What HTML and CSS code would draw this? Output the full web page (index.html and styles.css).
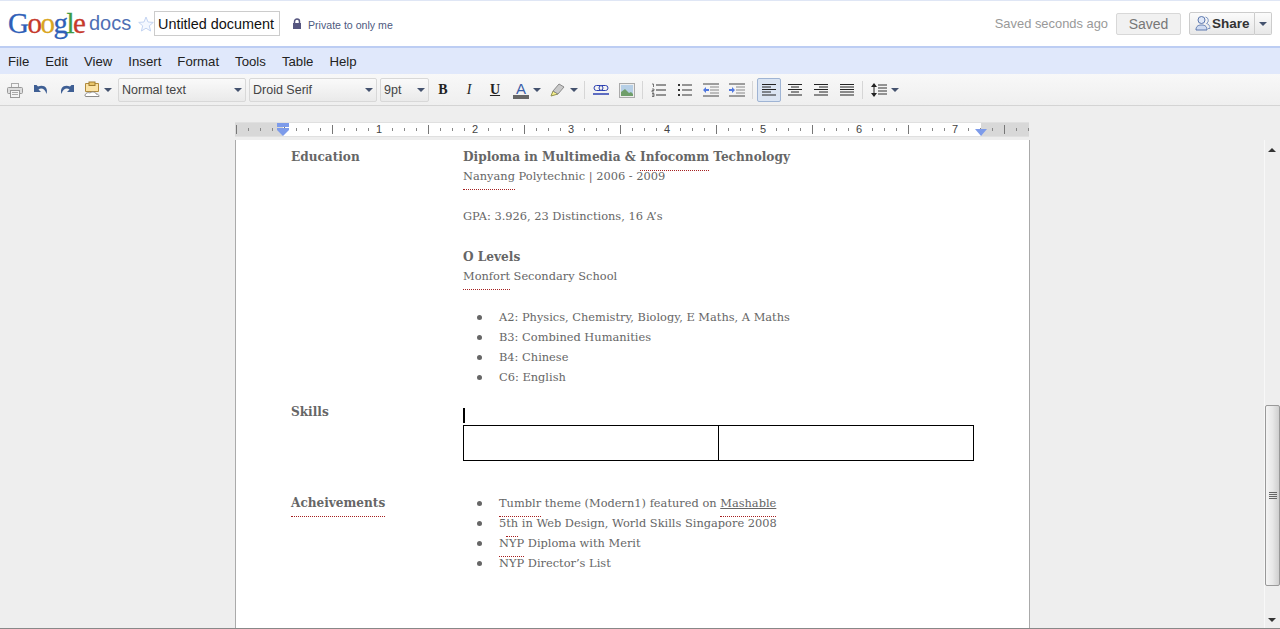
FILE: index.html
```html
<!DOCTYPE html>
<html>
<head>
    <title>Untitled document - Google Docs</title>
    <link rel="stylesheet" href="styles.css">
</head>

<body>
    <!-- top bar -->
    <div class="header">
        <div class="logo"><span class="g-blue">G</span><span class="g-red">o</span><span class="g-yellow">o</span><span class="g-blue">g</span><span class="g-green">l</span><span class="g-red">e</span></div>
        <div class="docs">docs</div>
        <svg class="star" width="16" height="16" viewBox="0 0 16 16"><path d="M8 1l2 5 5.300.400-4 3.400 1.300 5.200-4.600-2.800-4.600 2.800 1.300-5.200-4-3.400 5.300-.400z" fill="#f4f8ff" stroke="#c3d4f2"/></svg>
        <div class="doc-title">Untitled document</div>
        <svg class="lock" width="10" height="12" viewBox="0 0 10 12"><path d="M2.500 5V3.500a2.500 2.500 0 0 1 5 0V5" fill="none" stroke="#55557f" stroke-width="1.500"/><rect x="1" y="5" width="8" height="6" fill="#55557f"/></svg>
        <div class="private">Private to only me</div>
        <div class="spacer"></div>
        <div class="saved-note">Saved seconds ago</div>
        <div class="saved-btn">Saved</div>
        <div class="share-btn">
            <svg width="16" height="17" viewBox="0 0 16 17"><circle cx="6.500" cy="5" r="3.500" fill="#dfe7f7" stroke="#5a76ad"/><path d="M1 15c0-4 2.500-5 5.500-5s5.500 1 5.500 5z" fill="#cfdbf2" stroke="#5a76ad"/><path d="M10.500 2a3.500 3.500 0 0 1 1 6.500c2 .5 3.500 2 3.500 5h-2" fill="none" stroke="#7f97c4"/></svg>
            <span>Share</span>
        </div>
        <div class="share-arrow"><i class="arrow"></i></div>
    </div>

    <!-- menus -->
    <div class="menubar">
        <span>File</span><span>Edit</span><span>View</span><span>Insert</span><span>Format</span><span>Tools</span><span>Table</span><span>Help</span>
    </div>

    <!-- toolbar -->
    <div class="toolbar">
        <div class="btn"><svg width="16" height="16" viewBox="0 0 16 16"><rect x="4.500" y="1.500" width="7" height="4" fill="#f4f4f4" stroke="#aaa"/><rect x=".5" y="5.500" width="15" height="6" rx="1" fill="#ddd" stroke="#999"/><rect x="3.500" y="8.500" width="9" height="7" fill="#f4f4f4" stroke="#999"/><path d="M5 10.500h6M5 12.500h6" stroke="#aaa"/></svg></div>
        <div class="btn"><svg width="16" height="12" viewBox="0 0 16 12"><path d="M1 1v7h7L5.500 5.500C8 3.500 12 4.500 13.500 10 15.500 4 11 0 5 2.500L3.500 1z" fill="#3f5f94"/></svg></div>
        <div class="btn"><svg width="16" height="12" viewBox="0 0 16 12"><path d="M15 1v7H8l2.500-2.500C8 3.500 4 4.500 2.500 10 .5 4 5 0 11 2.500L12.500 1z" fill="#3f5f94"/></svg></div>
        <div class="btn wide"><svg width="16" height="18" viewBox="0 0 16 18"><path d="M1.500 2.500h13v8h-13z" fill="#fbe3a6" stroke="#b08a3c"/><rect x="5" y="1" width="6" height="3.500" fill="#e8c56a" stroke="#a07c30"/><path d="M1 15c0-3 3-4 5-3 2-2 6-1 6 1 2 0 3 1 3 2.500H1.500z" fill="#fff" stroke="#8a8a8a"/></svg><i class="arrow"></i></div>
        <div class="select size-l">Normal text<i class="arrow"></i></div>
        <div class="select size-l">Droid Serif<i class="arrow"></i></div>
        <div class="select size-s">9pt<i class="arrow"></i></div>
        <div class="btn b-first fmt-b">B</div>
        <div class="btn fmt-i">I</div>
        <div class="btn fmt-u">U</div>
        <div class="btn wide-c"><div class="color-a">A</div><i class="arrow"></i></div>
        <div class="btn wide-c"><svg width="16" height="16" viewBox="0 0 16 16"><path d="M1 14l2-5 5 3z" fill="#f6f08a" stroke="#8f8f50"/><path d="M3 9l6-7 5 3-6 7z" fill="#c9c9c9" stroke="#8a8a8a"/></svg><i class="arrow"></i></div>
        <div class="sep"></div>
        <div class="btn"><svg width="16" height="12" viewBox="0 0 16 12"><rect x="1" y="1.500" width="9" height="5" rx="2.500" fill="none" stroke="#2b3fb0"/><rect x="6" y="1.500" width="9" height="5" rx="2.500" fill="none" stroke="#2b3fb0"/><path d="M0 10h16" stroke="#2b3fb0" stroke-width="1.500"/></svg></div>
        <div class="btn"><svg width="16" height="15" viewBox="0 0 16 15"><rect x=".5" y=".5" width="15" height="14" fill="#eee" stroke="#aaa"/><rect x="2" y="2" width="12" height="11" fill="#b6cfe6"/><path d="M2 13V9l4-3 4 4 2-1 2 2v2z" fill="#6f9e6a"/></svg></div>
        <div class="sep"></div>
        <div class="btn"><svg width="16" height="14" viewBox="0 0 16 14"><path d="M5 2h10M5 7h10M5 12h10" stroke="#333"/><path d="M1 1h1.500v3M1 6h2v1.500H1V9h2M1 10.500h2v3H1M1 12h2" fill="none" stroke="#555" stroke-width=".8"/></svg></div>
        <div class="btn"><svg width="16" height="14" viewBox="0 0 16 14"><path d="M5 2h10M5 7h10M5 12h10" stroke="#333"/><path d="M1 1h2v2H1zM1 6h2v2H1zM1 11h2v2H1z" fill="#333"/></svg></div>
        <div class="btn"><svg width="16" height="14" viewBox="0 0 16 14"><path d="M0 1h16M0 13h16" stroke="#444"/><path d="M7 4h9M7 7h9M7 10h9" stroke="#888"/><path d="M0 7l3-3v2h3v2H3v2z" fill="#5078e0"/></svg></div>
        <div class="btn"><svg width="16" height="14" viewBox="0 0 16 14"><path d="M0 1h16M0 13h16" stroke="#444"/><path d="M7 4h9M7 7h9M7 10h9" stroke="#888"/><path d="M6 7L3 4v2H0v2h3v2z" fill="#5078e0"/></svg></div>
        <div class="sep"></div>
        <div class="btn active"><svg width="14" height="12" viewBox="0 0 14 12"><path d="M0 .5h14M0 3h9M0 5.500h14M0 8h9M0 11h14" stroke="#222"/></svg></div>
        <div class="btn"><svg width="14" height="12" viewBox="0 0 14 12"><path d="M0 .5h14M3 3h8M0 5.500h14M3 8h8M0 11h14" stroke="#222"/></svg></div>
        <div class="btn"><svg width="14" height="12" viewBox="0 0 14 12"><path d="M0 .5h14M5 3h9M0 5.500h14M5 8h9M0 11h14" stroke="#222"/></svg></div>
        <div class="btn"><svg width="14" height="12" viewBox="0 0 14 12"><path d="M0 .5h14M0 3h14M0 5.500h14M0 8h14M0 11h14" stroke="#222"/></svg></div>
        <div class="sep"></div>
        <div class="btn wide-c"><svg width="16" height="14" viewBox="0 0 16 14"><path d="M3 1v12" stroke="#222"/><path d="M0 4l3-4 3 4zM0 10l3 4 3-4z" fill="#222"/><path d="M7 2h9M7 5h9M7 8h9M7 11h9" stroke="#333"/></svg><i class="arrow"></i></div>
    </div>

    <!-- ruler -->
    <div class="ruler-row">
        <div class="ruler">
            <span>1</span><span>2</span><span>3</span><span>4</span><span>5</span><span>6</span><span>7</span>
            <svg class="indent-left" width="12" height="13" viewBox="0 0 12 13"><rect x="0" y="0" width="12" height="4" fill="#7d9bea"/><path d="M0 5h12v2L6 13 0 7z" fill="#7d9bea"/></svg>
            <svg class="indent-right" width="12" height="7" viewBox="0 0 12 7"><path d="M0 0h12L6 7z" fill="#7d9bea"/></svg>
        </div>
    </div>

    <div class="main">
        <div class="scroll-area">
            <div class="page">
                <div class="section edu">
                    <div class="label">Education</div>
                    <div class="body">
                        <div class="line strong">Diploma in Multimedia &amp; <span class="spell">Infocomm</span> Technology</div>
                        <div class="line"><span class="spell">Nanyang</span> Polytechnic | 2006 - 2009</div>
                        <div class="line"></div>
                        <div class="line">GPA: 3.926, 23 Distinctions, 16 A’s</div>
                        <div class="line"></div>
                        <div class="line strong">O Levels</div>
                        <div class="line"><span class="spell">Monfort</span> Secondary School</div>
                        <div class="line"></div>
                        <ul class="list">
                            <li>A2: Physics, Chemistry, Biology, E Maths, A Maths</li>
                            <li>B3: Combined Humanities</li>
                            <li>B4: Chinese</li>
                            <li>C6: English</li>
                        </ul>
                    </div>
                </div>
                <div class="section skills">
                    <div class="label">Skills</div>
                    <div class="body">
                        <div class="cursor-line"><div class="cursor"></div></div>
                        <table class="doc-table">
                            <tr><td></td><td></td></tr>
                        </table>
                    </div>
                </div>
                <div class="section achieve">
                    <div class="label"><span class="spell">Acheivements</span></div>
                    <div class="body">
                        <ul class="list">
                            <li><span><span class="spell">Tumblr</span> theme (Modern1) featured on <span class="spell link">Mashable</span></span></li>
                            <li><span>5<span class="spell">th</span> in Web Design, World Skills Singapore 2008</span></li>
                            <li><span><span class="spell">NYP</span> Diploma with Merit</span></li>
                            <li>NYP Director’s List</li>
                        </ul>
                    </div>
                </div>
            </div>
        </div>
        <div class="scrollbar">
            <div class="sb-up"></div>
            <div class="sb-track">
                <div class="sb-thumb"><div class="grip"></div></div>
            </div>
            <div class="sb-down"></div>
        </div>
    </div>
</body>

</html>
```
FILE: styles.css
```css
* {
    box-sizing: border-box;
}

html, body {
    margin: 0;
    height: 629px;
    overflow: hidden;
}

body {
    display: flex;
    flex-direction: column;
    font-family: "Liberation Sans", Arial, sans-serif;
    background-color: #eeeeee;
    border-bottom: 1px solid #888;
}

.arrow {
    display: block;
    width: 0;
    height: 0;
    border-left: 4px solid transparent;
    border-right: 4px solid transparent;
    border-top: 4px solid #44526e;
}

/* header */
.header {
    display: flex;
    align-items: center;
    height: 48px;
    flex: none;
    padding-left: 8px;
    background-color: white;
    border-top: 1px solid #dfe6f5;
    border-bottom: 2px solid #bccdf3;
}

.logo {
    font-family: "Liberation Serif", serif;
    font-size: 29px;
    width: 81px;
    letter-spacing: -1.500px;
    -webkit-text-stroke: .3px;
}

.g-blue { color: #2f5fb8; }
.g-red { color: #c6392b; }
.g-yellow { color: #d9a520; }
.g-green { color: #3f9a44; }

.docs {
    font-size: 20px;
    color: #4f6fb4;
    width: 49px;
}

.doc-title {
    width: 126px;
    height: 25px;
    padding-left: 3px;
    border: 1px solid #ccc;
    font-size: 14.400px;
    line-height: 24px;
    color: #111;
    white-space: nowrap;
}

.lock {
    margin-left: 12px;
}

.private {
    margin-left: 6px;
    font-size: 10.600px;
    color: #4d5a80;
    margin-top: 2px;
}

.spacer {
    flex: 1;
}

.saved-note {
    font-size: 12.900px;
    color: #999;
}

.saved-btn {
    margin-left: 8px;
    width: 65px;
    height: 22px;
    border: 1px solid #d8d8d8;
    border-radius: 2px;
    background-color: #f1f1f1;
    color: #777;
    font-size: 14px;
    line-height: 20px;
    text-align: center;
}

.share-btn {
    display: flex;
    align-items: center;
    gap: 1px;
    margin-left: 8px;
    width: 66px;
    height: 23px;
    padding-left: 5px;
    border: 1px solid #ccc;
    border-radius: 2px 0 0 2px;
    background: linear-gradient(#fbfbfb, #e8e8e8);
    font-size: 13.500px;
    font-weight: bold;
    color: #333;
}

.share-arrow {
    display: flex;
    align-items: center;
    justify-content: center;
    width: 17px;
    height: 23px;
    margin-right: 8px;
    border: 1px solid #ccc;
    border-left: none;
    border-radius: 0 2px 2px 0;
    background: linear-gradient(#fbfbfb, #e8e8e8);
}

/* menu */
.menubar {
    display: flex;
    gap: 16px;
    align-items: center;
    flex: none;
    height: 26px;
    padding-left: 8px;
    background-color: #e0e8fb;
    font-size: 13.200px;
    color: #222;
}

/* toolbar */
.toolbar {
    display: flex;
    align-items: center;
    flex: none;
    height: 32px;
    padding: 1px 0 0 2px;
    background: linear-gradient(#f8f8f8, #efefef);
    border-bottom: 1px solid #d4d4d4;
}

.btn {
    display: flex;
    align-items: center;
    justify-content: center;
    gap: 4px;
    flex: none;
    width: 26px;
    height: 24px;
}

.btn.wide {
    width: 36px;
    margin-right: 2px;
}

.btn.wide-c {
    width: 38px;
}

.btn.wide-c + .btn.wide-c {
    width: 36px;
}

.btn.active {
    width: 24px;
    margin: 0 1px;
    border: 1px solid #9fb4d4;
    border-radius: 2px;
    background-color: #dbe5f3;
}

.b-first {
    margin-left: 1px;
}

.fmt-b, .fmt-i, .fmt-u {
    font-family: "Liberation Serif", serif;
    font-size: 14px;
    color: #222;
}

.fmt-b {
    font-weight: bold;
}

.fmt-i {
    font-style: italic;
}

.fmt-u {
    font-weight: bold;
    text-decoration: underline;
}

.color-a {
    width: 16px;
    font-size: 15px;
    line-height: 13px;
    text-align: center;
    color: #3b5ea8;
    border-bottom: 4px solid #666;
}

.select {
    display: flex;
    align-items: center;
    justify-content: space-between;
    flex: none;
    height: 24px;
    margin-right: 3px;
    padding: 0 3px 0 3px;
    border: 1px solid #d8d8d8;
    border-radius: 2px;
    background: linear-gradient(#fafafa, #eaeaea);
    font-size: 12.500px;
    color: #444;
}

.size-l {
    width: 128px;
}

.size-s {
    width: 49px;
    margin-right: 0;
}

.sep {
    flex: none;
    width: 1px;
    height: 18px;
    margin: 0 3px 0 2px;
    background-color: #d6d6d6;
}

/* ruler */
.ruler-row {
    flex: none;
    height: 34px;
    padding: 16px 0 0 235px;
}

.ruler {
    position: relative;
    display: flex;
    width: 794px;
    height: 15px;
    padding-left: 96px;
    border-top: 1px solid #e0e0e0;
    border-bottom: 1px solid #e0e0e0;
    background:
        repeating-linear-gradient(90deg, #777 0 1px, transparent 1px 48px) 1px 2px / 100% 9px no-repeat,
        repeating-linear-gradient(90deg, #888 0 1px, transparent 1px 12px) 1px 5px / 100% 3px no-repeat,
        linear-gradient(90deg, #d8d8d8 48px, white 48px, white 746px, #d8d8d8 746px);
}

.ruler span {
    width: 96px;
    font-size: 11px;
    line-height: 13px;
    text-align: center;
    color: #444;
    background: linear-gradient(90deg, transparent 42px, white 42px, white 54px, transparent 54px);
}

.indent-left {
    position: absolute;
    left: 42px;
    top: 0;
}

.indent-right {
    position: absolute;
    left: 740px;
    top: 6px;
}

/* document */
.main {
    flex: 1;
    display: flex;
    min-height: 0;
}

.scroll-area {
    flex: 1;
    padding-left: 235px;
    overflow: hidden;
}

.page {
    width: 795px;
    height: 100%;
    padding: 7px 55px 0 55px;
    background-color: white;
    border-left: 1px solid #aaa;
    border-right: 1px solid #aaa;
    font-family: "DejaVu Serif", serif;
    font-size: 11.400px;
    color: #666;
}

.section {
    display: flex;
}

.skills {
    margin-top: 15px;
}

.achieve {
    margin-top: 32px;
}

.label {
    flex: none;
    width: 172px;
    font-size: 12.100px;
    font-weight: bold;
    line-height: 20px;
}

.body {
    flex: 1;
}

.line {
    height: 20px;
    line-height: 18px;
    white-space: nowrap;
}

.strong {
    font-size: 12.150px;
    font-weight: bold;
    line-height: 20px;
}

.spell {
    padding-bottom: 6px;
    border-bottom: 1px dotted #a52020;
}

.link {
    text-decoration: underline;
}

.list {
    margin: 0;
    padding: 0 0 0 14px;
    list-style: none;
}

.list li {
    display: flex;
    align-items: center;
    height: 20px;
    line-height: 20px;
    white-space: nowrap;
}

.list li::before {
    content: "";
    flex: none;
    width: 5px;
    height: 5px;
    margin-right: 17px;
    border-radius: 50%;
    background-color: #666;
}

.cursor-line {
    height: 23px;
    padding-top: 6px;
}

.cursor {
    width: 2px;
    height: 15px;
    background-color: black;
}

.doc-table {
    width: 511px;
    height: 36px;
    border-collapse: collapse;
}

.doc-table td {
    width: 50%;
    border: 1px solid black;
}

/* scrollbar */
.scrollbar {
    display: flex;
    flex-direction: column;
    flex: none;
    width: 16px;
    border-left: 1px solid #f8f8f8;
}

.sb-up, .sb-down {
    flex: none;
    height: 20px;
    position: relative;
}

.sb-up::after, .sb-down::after {
    content: "";
    position: absolute;
    left: 3px;
    top: 8px;
    border-left: 4px solid transparent;
    border-right: 4px solid transparent;
}

.sb-up::after {
    border-bottom: 4px solid #333;
}

.sb-down::after {
    border-top: 4px solid #333;
    top: 10px;
}

.sb-track {
    flex: 1;
    padding-top: 245px;
}

.sb-thumb {
    display: flex;
    align-items: center;
    justify-content: center;
    width: 15px;
    height: 181px;
    border: 1px solid #999;
    border-radius: 2px;
    background: linear-gradient(90deg, #f4f4f4, #e8e8e8 50%, #cfcfcf);
}

.grip {
    width: 8px;
    height: 8px;
    background: repeating-linear-gradient(#666 0 1px, transparent 1px 2px);
}
```
